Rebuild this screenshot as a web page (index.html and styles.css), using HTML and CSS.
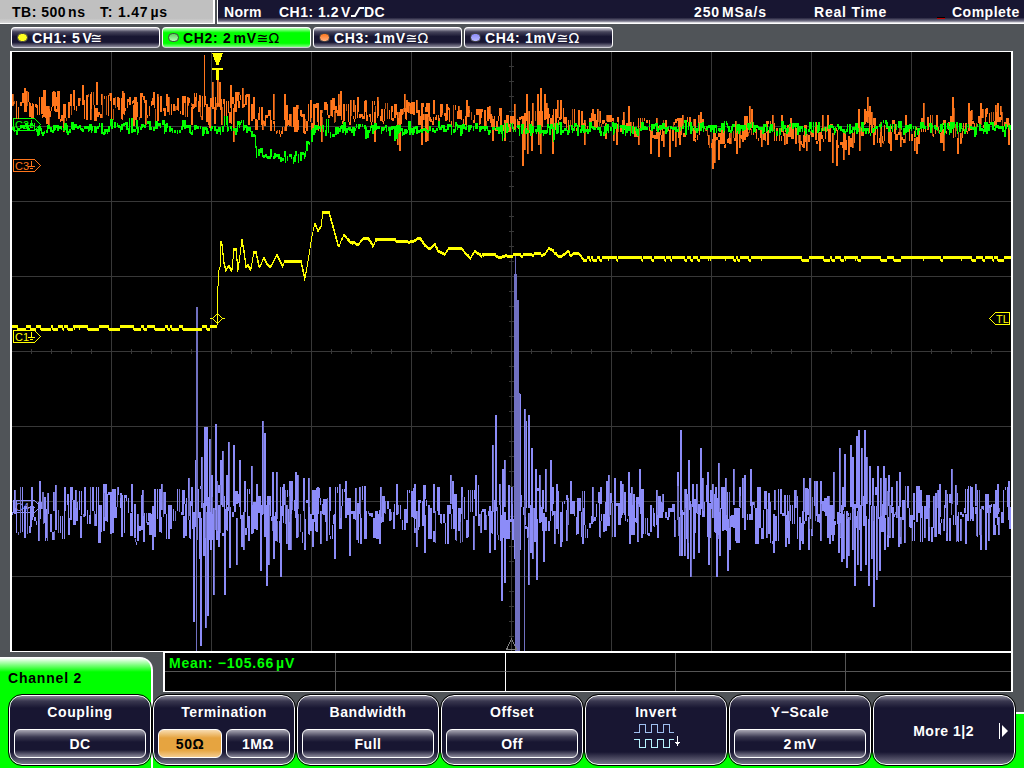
FILE: index.html
```html
<!DOCTYPE html>
<html lang="en">
<head>
    <meta charset="UTF-8">
    <meta name="viewport" content="width=device-width, initial-scale=1.0">
    <title>Oscilloscope</title>
    <link rel="stylesheet" href="styles.css">
</head>
<body>
    <div class="scope">
        <!-- Status bar -->
        <header class="status">
            <div class="timebase"><span class="tb">TB: 500<i class="thin"></i>ns</span><span class="tpos">T: 1.47<i class="thin"></i>µs</span></div>
            <div class="trigger">
                <span class="mode">Norm</span>
                <span class="level">CH1: 1.2<i class="thin"></i>V<svg class="edge" width="13" height="12" viewBox="0 0 13 12"><path d="M0 10H4L8.500 2H13" fill="none" stroke="#fff" stroke-width="2"/></svg>DC</span>
                <span class="rate">250<i class="thin"></i>MSa/s</span>
                <span class="acq">Real Time</span>
                <span class="led"></span>
                <span class="state">Complete</span>
            </div>
        </header>

        <!-- Channel tabs -->
        <nav class="channels">
            <div class="channel ch1"><span class="dot"></span>CH1: 5<i class="thin"></i>V<span class="sym">≅</span></div>
            <div class="channel ch2 active"><span class="dot"></span>CH2: 2<i class="thin"></i>mV<span class="sym">≅Ω</span></div>
            <div class="channel ch3"><span class="dot"></span>CH3: 1mV<span class="sym">≅Ω</span></div>
            <div class="channel ch4"><span class="dot"></span>CH4: 1mV<span class="sym">≅Ω</span></div>
        </nav>

        <!-- Waveform screen -->
        <main class="screen">
            <svg class="plot" width="999" height="599" viewBox="12 52 999 599" shape-rendering="crispEdges">
                <path id="grid" class="grid"/>
                <g class="mark c2">
                    <path d="M13.5 118.5H34.5L40.5 124.5L34.5 130.5H13.5Z"/>
                    <text x="15" y="129">C2</text>
                    <path d="M31.5 120V125M28 125.5H35M30 127.500H33"/>
                </g>
                <g class="mark c4">
                    <path d="M13.5 500.5H34.5L40.5 506.5L34.5 512.5H13.5Z"/>
                    <text x="15" y="511">C4</text>
                    <path d="M31.5 502V507M28 507.5H35M30 509.500H33"/>
                </g>
                <path id="ch4" class="trace4"/>
                <path id="ch4dark" class="trace4dark"/>
                <path id="ch3dark" class="trace3dark"/>
                <path id="ch3" class="trace3"/>
                <path id="ch2" class="trace2"/>
                <path id="ch1" class="trace1"/>
                <g class="mark c3">
                    <path d="M13.5 159.5H34.5L40.5 165.5L34.5 171.5H13.5Z"/>
                    <text x="15" y="170">C3</text>
                    <path d="M31.5 161V166M28 166.5H35M30 168.5H33"/>
                </g>
                <g class="mark c1">
                    <path d="M13.5 330.5H34.5L40.5 336.5L34.5 342.5H13.5Z"/>
                    <text x="15" y="341">C1</text>
                    <path d="M31.5 332V337M28 337.5H35M30 339.5H33"/>
                </g>
                <g class="mark c1">
                    <path d="M212.5 318.5L217.5 313.5L222.5 318.5L217.5 323.5ZM210 318.5H213M222 318.5H225"/>
                    <path d="M989.5 318.5L995.5 312.5H1009.5V324.5H995.5Z"/>
                    <text x="996" y="323">TL</text>
                </g>
                <path class="trigpos" d="M212 53H223L218.5 65H216.500ZM212 68H223V70H219V80H216V70H212Z"/>
                <path class="ref" d="M506.500 649.500L511.500 639L516.500 649.500Z"/>
            </svg>
        </main>

        <!-- Measurements and softkey menu -->
        <footer class="bottom">
            <div class="readout">
                <div class="tab">Channel 2</div>
                <div class="measure">
                    <div class="cell first">Mean: −105.66<i class="thin"></i>µV</div><div class="cell"></div><div class="cell"></div><div class="cell"></div><div class="cell"></div>
                    <div class="cell"></div><div class="cell"></div><div class="cell"></div><div class="cell"></div><div class="cell"></div>
                </div>
            </div>
            <div class="softkeys">
                <div class="key"><div class="name">Coupling</div><div class="values"><span class="value">DC</span></div></div>
                <div class="key"><div class="name">Termination</div><div class="values"><span class="value on">50Ω</span><span class="value">1MΩ</span></div></div>
                <div class="key"><div class="name">Bandwidth</div><div class="values"><span class="value">Full</span></div></div>
                <div class="key"><div class="name">Offset</div><div class="values"><span class="value">Off</span></div></div>
                <div class="key">
                    <div class="name">Invert</div>
                    <svg class="invert" width="48" height="28" viewBox="0 0 48 28" shape-rendering="crispEdges">
                        <path class="wave" d="M0 9.500H5.500V1.500H11.500V9.500H17.500V1.500H23.500V9.500H29.500V1.500H35.500V9.500H40"/>
                        <path class="wave low" d="M0 16.500H5.500V24.500H11.500V16.500H17.500V24.500H23.500V16.500H29.500V24.500H35.500V16.500H40"/>
                        <path d="M43 13H44V19H46L43.500 23L41 19H43Z" fill="#fff"/>
                    </svg>
                </div>
                <div class="key"><div class="name">Y−Scale</div><div class="values"><span class="value">2<i class="thin"></i>mV</span></div></div>
                <div class="key more"><span>More 1|2</span><svg class="next" width="10" height="16" viewBox="0 0 10 16"><path d="M.5 0V16" stroke="#fff"/><path d="M3 2V14L9 8Z" fill="#fff"/></svg></div>
            </div>
        </footer>
    </div>
    <script src="script.js"></script>
</body>
</html>
```
FILE: styles.css
```css
* {
    box-sizing: border-box;
}

body {
    margin: 0;
    font-family: "Liberation Sans", Arial, sans-serif;
    font-size: 14px;
    font-weight: bold;
    letter-spacing: 0.5px;
    color: #fff;
    background: #505458;
}

.scope {
    width: 1024px;
    height: 768px;
    overflow: hidden;
    display: flex;
    flex-direction: column;
    white-space: nowrap;
}

.thin {
    display: inline-block;
    width: 2px;
}

/* Status bar */
.status {
    display: flex;
    gap: 2px;
    height: 24px;
}

.timebase {
    width: 215px;
    display: flex;
    padding: 4px 0 0 12px;
    line-height: 16px;
    color: #000;
    background: linear-gradient(#c0c0c0 80%, #d8d8d8);
    border-right: 2px solid #fff;
    border-bottom: 1px solid #fff;
}

.tb {
    width: 88px;
}

.tpos {
    letter-spacing: 0.8px;
}

.trigger {
    width: 807px;
    display: flex;
    padding: 4px 0 0 6px;
    line-height: 16px;
    background: linear-gradient(#181632 76%, #777589 92%, #fff);
    border-left: 1px solid #fff;
    border-bottom: 1px solid #fff;
}

.mode {
    width: 55px;
    letter-spacing: 0.3px;
}

.level {
    width: 415px;
}

.edge {
    vertical-align: -1px;
}

.rate {
    width: 120px;
    letter-spacing: 0.9px;
}

.acq {
    width: 123px;
    letter-spacing: 0.8px;
}

.led {
    width: 8px;
    height: 2px;
    margin: 13px 7px 0 0;
    background: #000;
    border-bottom: 1px solid #c00000;
}

/* Channel tabs */
.channels {
    display: flex;
    gap: 2px;
    height: 27px;
    padding: 3px 0 3px 11px;
}

.channel {
    width: 149px;
    height: 21px;
    display: flex;
    align-items: center;
    padding-left: 5px;
    letter-spacing: 0.7px;
    border: 1px solid #fff;
    border-bottom-color: #d0d0d8;
    border-radius: 4px;
    background: linear-gradient(#cfcdd8, #47455c 20%, #181632 45%, #181632 75%, #8b899a);
}

.channel.active {
    color: #000;
    background: linear-gradient(#c0ffc0, #00ff00 25%, #00ff00 80%, #80ff80);
}

.dot {
    width: 11px;
    height: 9px;
    margin-right: 4px;
    border-radius: 5px;
    border: 1px solid #444;
}

.ch1 .dot {
    background: #ffff20;
}

.ch2 .dot {
    background: linear-gradient(#60d060, #b0ffb0);
}

.ch3 .dot {
    background: linear-gradient(#ff761c, #ffb080);
}

.ch4 .dot {
    background: linear-gradient(#8c8cf8, #b8b8ff);
}

.sym {
    font-family: "DejaVu Sans", sans-serif;
    font-size: 14px;
    font-weight: normal;
    letter-spacing: 0;
}

.ch1 .sym {
    margin-left: -2px;
}

/* Waveform screen */
.screen {
    width: 1003px;
    height: 601px;
    margin-left: 10px;
    border: solid #fff;
    border-width: 1px 2px;
    background: #000;
}

.plot {
    display: block;
}

.grid {
    fill: none;
    stroke: #383838;
}

.mark path {
    fill: none;
    stroke: currentColor;
}

.mark text {
    font-size: 11px;
    font-weight: normal;
    fill: currentColor;
    letter-spacing: 0;
}

.c1 {
    color: #ffff00;
}

.c2 {
    color: #00ff00;
}

.c3 {
    color: #ff761c;
}

.c4 {
    color: #8c8cf8;
}

.trace1,
.trigpos {
    fill: #ffff00;
}

.trace2 {
    fill: #00ff00;
}

.trace3 {
    fill: #ff761c;
}

.trace3dark {
    fill: #b45214;
}

.trace4 {
    fill: #8c8cf8;
}

.trace4dark {
    fill: #7070c0;
}

.ref {
    fill: none;
    stroke: #808080;
}

/* Measurements */
.bottom {
    height: 116px;
    background: linear-gradient(#505458 60px, #fff 60px, #fff 62px, #00ff00 62px);
}

.readout {
    display: flex;
    gap: 10px;
    height: 43px;
}

.tab {
    width: 153px;
    height: 111px;
    margin-top: 5px;
    padding: 12px 8px;
    line-height: 16px;
    letter-spacing: 0.8px;
    color: #000;
    border: solid #fff;
    border-width: 1px 2px 0 0;
    border-radius: 0 13px 0 0;
    background: linear-gradient(#fff, #00ff00 14px);
}

.measure {
    width: 850px;
    height: 40px;
    display: grid;
    grid-template-columns: 171px 170px 170px 170px 165px;
    grid-template-rows: 19px 19px;
    border: 2px solid #fff;
    border-top-width: 1px;
    border-bottom-width: 1px;
    background: #000;
}

.cell {
    line-height: 20px;
    padding-left: 4px;
    letter-spacing: 0.75px;
    color: #00ff00;
    border: solid #555;
    border-width: 0 1px 1px 0;
}

.cell:nth-child(5n) {
    border-right: none;
}

.cell:nth-child(5n + 2) {
    border-right-color: #fff;
}

.cell:nth-child(n + 6) {
    border-bottom: none;
}

/* Softkeys */
.softkeys {
    position: relative;
    display: flex;
    gap: 2px;
    padding-left: 9px;
}

.key {
    width: 142px;
    height: 70px;
    display: flex;
    flex-direction: column;
    align-items: center;
    padding: 8px 3px 0;
    border: 1px solid #fff;
    border-radius: 13px;
    outline: 1px solid #000;
    background: linear-gradient(#8b899a, #3a3850 5px, #181632 12px, #181632 56px, #777589);
}

.name {
    line-height: 16px;
    letter-spacing: 0.6px;
}

.values {
    width: 100%;
    display: flex;
    gap: 4px;
    margin-top: 9px;
    padding: 0 1px;
}

.value {
    flex: 1;
    height: 29px;
    line-height: 28px;
    text-align: center;
    border: 1px solid #fff;
    border-radius: 6px;
    background: linear-gradient(#aaa8b5, #3a3850 7px, #181632 12px, #181632 20px, #8b899a);
}

.value.on {
    color: #000;
    background: linear-gradient(#f8dcb0, #e6a440 8px, #e6a440 20px, #f4cc90);
}

.invert {
    margin: 3px 0 0 3px;
}

.wave {
    fill: none;
    stroke: #a0c0f0;
}

.wave.low {
    stroke: #b8f4ff;
}

.more {
    flex-direction: row;
    justify-content: flex-end;
    gap: 25px;
    padding: 2px 5px 0 0;
}
```
FILE: script.js
```js
// Repeatable noise, so the traces look the same on every load
let seed = 7;
function rnd() {
    seed = (seed * 16807) % 2147483647;
    return seed / 2147483647;
}

function bar(x, y1, y2, w) {
    const top = Math.round(Math.min(y1, y2));
    const h = Math.max(3, Math.round(Math.abs(y2 - y1)));
    return `M${Math.round(x)} ${top}h${w}v${h}h${-w}z`;
}

// Linear interpolation in a list of x, y pairs
function level(keys, x) {
    for (let i = 2; i < keys.length; i += 2) {
        if (x <= keys[i]) {
            const t = (x - keys[i - 2]) / (keys[i] - keys[i - 2]);
            return keys[i - 1] + t * (keys[i + 1] - keys[i - 1]);
        }
    }
    return keys[keys.length - 1];
}

function set(id, d) {
    document.getElementById(id).setAttribute("d", d);
}

// Grid with ticks on the centre axes
let grid = "";
for (let x = 111; x < 1011; x += 100) grid += `M${x}.5 52V651`;
for (let y = 126; y < 651; y += 75) grid += `M12 ${y}.5H1011`;
for (let x = 31; x < 1011; x += 20) grid += `M${x}.5 349V354`;
for (let y = 66; y < 651; y += 15) grid += `M509 ${y}.5H514`;
set("grid", grid);

// Channel 4: noise band with bursts, x and y of each burst tip
const tips4 = [
    14,490, 24,538, 31,487, 38,541, 39,481, 45,538, 53,492, 64,487, 68,535, 75,490, 80,538, 84,487, 103,493, 120,493,
    131,484, 142,490, 152,550, 154,537, 161,484, 170,529, 183,538, 188,478, 191,487, 193,622, 195,460, 199,559, 200,646,
    201,457, 203,556, 204,427, 205,628, 206,427, 207,616, 209,439, 210,550, 211,475, 213,595, 215,424, 216,540, 216,481,
    218,547, 220,460, 222,451, 224,595, 226,475, 228,442, 229,568, 233,445, 236,565, 239,460, 241,547, 243,550, 244,481,
    248,541, 251,466, 256,484, 260,571, 262,421, 264,433, 266,586, 268,565, 272,472, 273,559, 276,472, 280,577, 283,484,
    286,544, 288,550, 289,481, 290,550, 291,481, 295,472, 297,475, 303,478, 304,550, 308,478, 312,547, 317,487, 320,544,
    329,487, 334,559, 339,484,
    345,481, 349,556, 359,487, 360,544, 379,544, 380,487, 396,484, 414,484, 416,547, 424,553, 433,484, 450,475, 452,481,
    461,487, 473,550, 475,475, 489,553, 492,445, 494,550, 495,415, 499,484, 501,601, 502,469, 504,460, 504,583, 508,487,
    511,487, 512,540, 514,559, 524,409, 525,421, 528,415, 528,585, 530,553, 531,448, 532,559, 535,469, 536,580, 539,475,
    542,490, 543,562, 545,469, 550,460, 552,487, 554,544, 556,484, 560,547, 566,541, 570,481, 582,544, 592,487, 600,487,
    606,481, 608,475, 614,478, 620,481, 622,484, 628,472, 629,544, 631,487, 639,469, 641,538, 656,490, 657,538, 677,472,
    679,556,
    680,430, 681,556, 684,556, 687,559, 688,460, 690,577, 692,484, 693,559, 696,484, 698,553, 700,448, 702,478, 707,472,
    708,565, 712,484, 715,487, 716,577, 718,463, 719,556, 721,487, 725,478, 727,571, 729,550, 733,469, 735,541, 739,487,
    742,478, 744,475, 750,469, 766,538, 768,493, 773,553, 774,490, 785,547, 788,544, 795,490, 799,550, 802,544, 803,478,
    808,550, 809,478, 814,481, 816,481, 820,481, 820,541, 827,538, 829,544, 833,472, 832,541, 838,553, 839,448, 841,562,
    842,487, 843,559, 844,454, 846,568, 848,556, 850,445, 852,457, 852,550, 854,586, 856,436, 857,565, 858,430, 860,571,
    861,448, 864,430, 865,565, 866,457, 868,586, 869,466, 871,559, 872,478, 873,607, 876,580, 877,466, 879,571, 880,478,
    883,466, 884,550, 885,478, 887,547, 888,475, 889,538, 891,487, 892,538, 896,481, 898,547, 899,472, 900,544, 913,493,
    920,490, 924,538, 928,541, 939,484, 945,490, 946,541, 949,541, 951,469, 956,493, 956,541, 960,541, 965,544, 971,487,
    975,484, 980,550, 985,550, 988,541, 995,490, 997,484, 998,535, 1008,481
];

let light = "";
let dark = "";
let prev = 512;
let up = true;
for (let x = 12; x < 1010; x += rnd() < 0.35 ? 1 : 2) {
    const y = 514 + (up ? -1 : 1) * Math.pow(rnd(), 1.3) * 30;
    const w = rnd() < 0.6 ? 2 : 1;
    if (rnd() < 0.15) dark += bar(x, prev, y, 1);
    else light += bar(x, prev, y, w);
    prev = y;
    up = rnd() < 0.4 ? up : !up;
}
for (let i = 0; i < tips4.length; i += 2) {
    const mid = 512 + (rnd() - 0.5) * 16;
    light += bar(tips4[i], mid, tips4[i + 1], 1);
    if (i % 3) light += bar(tips4[i] + 1, mid, tips4[i + 1], 1);
    else dark += bar(tips4[i] + 1, mid, tips4[i + 1], 1);
}
// Main bursts run off the bottom of the screen
dark += bar(196, 307, 540, 2) + bar(196, 540, 651, 1);
dark += bar(515, 255, 651, 1) + bar(514, 274, 540, 3) + bar(515, 300, 651, 4) + bar(519, 393, 651, 1) + bar(524, 500, 651, 1);
light += bar(520, 394, 550, 1);
set("ch4", light);
set("ch4dark", dark);

// Channel 3
const base3 = [12,106, 150,105, 200,107, 245,108, 260,120, 300,120, 325,116, 340,112, 400,112, 480,118, 520,122, 560,118,
    620,124, 660,132, 680,128, 700,128, 715,142, 725,134, 745,127, 800,135, 830,130, 838,143, 850,134, 866,122, 875,132,
    905,132, 915,139, 925,123, 940,133, 950,120, 957,138, 968,120, 1000,115, 1011,128];
const tips3 = [
    12,94, 24,88, 26,91, 31,118, 48,127, 46,124, 53,91, 56,97, 63,132, 70,94, 73,94, 82,85, 90,120, 96,82, 101,94, 113,98,
    122,91, 129,97, 134,97, 133,126, 145,125, 152,98, 157,94, 166,94, 187,97, 191,125, 195,97, 199,96, 204,55, 206,122,
    208,125, 209,128, 212,82, 214,124, 217,80, 219,82, 221,125, 230,85, 233,142, 238,101, 242,88, 253,97, 262,130, 270,131,
    273,94, 284,94, 288,125, 297,130, 304,128, 310,100, 321,142, 335,106, 338,94,
    340,91, 353,100, 357,97, 365,100, 374,142, 377,97, 391,106, 397,145, 399,151, 404,94, 406,100, 408,102, 410,104,
    416,100, 421,145, 423,120, 425,142, 427,141, 433,100, 441,106, 446,104, 458,106, 466,100, 468,106, 480,109, 489,106,
    492,141, 500,118, 504,141, 514,104, 522,166, 524,150, 526,94, 527,154, 531,151, 532,103, 537,94, 538,145, 540,88,
    540,154, 544,94, 546,103, 552,154, 557,100, 560,100, 584,145, 592,109, 597,109, 605,138, 613,141, 616,145, 623,112,
    628,106, 638,145, 650,154, 656,118, 658,157, 663,147, 669,157, 675,147, 679,145,
    682,115, 693,141, 698,115, 700,112, 708,145, 712,169, 714,163, 718,160, 729,141, 736,154, 739,148, 742,142, 749,106,
    751,109, 761,147, 767,145, 772,115, 781,115, 784,145, 790,118, 799,151, 803,147, 806,151, 819,151, 822,115, 827,115,
    832,163, 836,166, 843,160, 848,154, 852,147, 858,109, 859,151, 864,109, 867,97, 869,106, 871,112, 873,145, 880,147,
    890,151, 900,147, 905,115, 914,151, 916,154, 923,103, 936,115, 943,151, 952,97, 953,108, 957,154, 960,144, 968,103,
    971,110, 980,103, 982,109, 985,109, 995,105, 997,103, 1000,106, 1008,145
];
light = "";
dark = "";
prev = 105;
for (let x = 12; x < 1010; x += rnd() < 0.5 ? 1 : 2) {
    const spread = x < 340 ? 32 : 24;
    const y = level(base3, x) + (rnd() - 0.5) * spread;
    if (rnd() < 0.15) dark += bar(x, prev, y, 1);
    else light += bar(x, prev, y, rnd() < 0.5 ? 2 : 1);
    prev = y;
}
for (let i = 0; i < tips3.length; i += 2) {
    const mid = level(base3, tips3[i]);
    light += bar(tips3[i], mid, tips3[i + 1], 1);
    if (tips3[i + 1] > 60) {
        if (i % 4) light += bar(tips3[i] + 1, mid, tips3[i + 1], 1);
        else dark += bar(tips3[i] + 1, mid, tips3[i + 1], 1);
    }
}
set("ch3", light);
set("ch3dark", dark);

// Channel 2
const base2 = [12,127, 249,127, 253,140, 257,150, 262,155, 270,155, 278,157, 304,157, 306,148, 312,132, 325,130, 340,128, 1011,128];
light = "";
prev = 127;
for (let x = 12; x < 1010; x += rnd() < 0.5 ? 1 : 2) {
    let y = level(base2, x) + (rnd() + rnd() - 1) * 8;
    if (rnd() < 0.05) y += rnd() < 0.5 ? -5 : 6;
    light += bar(x, prev, y + (y > prev ? 2 : 0), rnd() < 0.6 ? 2 : 1);
    prev = y;
}
set("ch2", light);

// Channel 1: step response
const step = [
    216,327, 217,286, 218,270, 219,267, 220,241, 221,244, 223,262, 225,269, 228,265, 231,270, 233,248, 235,248,
    237,270, 241,239, 243,250, 245,266, 247,264, 250,269, 253,251, 255,251, 258,265, 260,264, 263,257, 266,263, 270,266,
    276,254, 279,260, 282,266, 284,260, 300,260, 304,278, 308,255, 311,236, 314,223, 317,230, 320,226, 322,211, 328,211,
    332,225, 337,244, 339,244, 343,232, 346,236, 349,241, 353,241, 357,244, 362,238, 366,235, 372,244, 375,238, 406,238,
    409,241, 418,235, 424,244, 428,248, 434,241, 437,250, 444,253, 448,247, 460,247, 465,253, 470,256, 474,250, 478,253,
    495,253, 500,256, 508,253, 525,253, 540,252, 544,253, 548,247, 553,250, 560,256, 567,250, 570,253, 574,250, 582,256, 1011,256
];
light = "";
prev = 326;
let ripple = 0;
for (let x = 12; x < 1011; x++) {
    const before = x < 217;
    let y = before ? 325 : level(step, x);
    if (rnd() < 0.4) {
        ripple = rnd() < (before ? 0.55 : 0.3) ? 3 : 0;
    }
    if (before || x > 582) y += ripple;
    else if (x > 340) y += ripple / 2;
    light += bar(x, prev, y + (y > prev ? 2 : 0), 1);
    prev = y;
}
set("ch1", light);
```
